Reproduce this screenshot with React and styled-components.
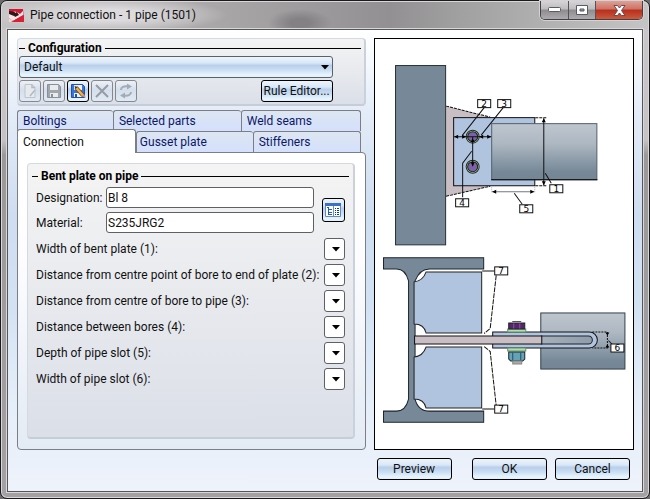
import React from "react";
import styled, { createGlobalStyle, css } from "styled-components";

const GlobalStyle = createGlobalStyle`
  *, *::before, *::after { box-sizing: border-box; }
  body {
    margin: 0;
    background: #6d6a6d;
    color: #111;
    font: 12px/16px Roboto, "Open Sans", sans-serif;
  }
  button, input, select { font: inherit; color: inherit; margin: 0; }
`;

const Window = styled.main`
  display: flex;
  flex-direction: column;
  min-height: 100vh;
  padding: 0 6px 6px;
  border: 1px solid #1d1a1d;
  border-radius: 7px;
  background: linear-gradient(#c9c7c9 0, #c4c2c4 28%, #9b989a 31%, #a3a1a3 100%);
  box-shadow: inset 0 0 0 1px #d9d7d9;
`;

const TitleBar = styled.header`
  display: flex;
  align-items: flex-start;
  height: 28px;
  margin: 0 -5px;
  padding: 0 5px;
  border-radius: 6px 6px 0 0;
  background:
    radial-gradient(ellipse 120px 18px at 105px 14px, #dddbdd 30%, transparent 100%),
    radial-gradient(ellipse 32px 14px at 298px 22px, #838183 30%, transparent 100%),
    linear-gradient(90deg, #c4c1c3 0, #a9a6a8 34%, #929092 60%, #a3a2a3 72%, #c5c4c5 100%);
  box-shadow: inset 0 1px #d9d7d9;
`;

const AppIcon = styled.svg`
  width: 15px;
  height: 15px;
  margin: 7px 6px 0 2px;
`;

const Title = styled.h1`
  flex: 1;
  margin: 6px 0 0;
  font-size: 12px;
  font-weight: 400;
  line-height: 16px;
`;

const WindowButtons = styled.div`
  display: flex;
  height: 19px;
  border: 1px solid #434144;
  border-top: 0;
  border-radius: 0 0 5px 5px;
  overflow: hidden;
  box-shadow: 0 0 0 1px #d4d2d4;
`;

const WindowButton = styled.button`
  display: grid;
  place-items: center;
  width: ${(p) => (p.$close ? "47px" : "27px")};
  padding: 0;
  border: 0;
  border-left: ${(p) => (p.$first ? "0" : "1px solid #565356")};
  background: ${(p) =>
    p.$close
      ? "linear-gradient(#dda096 0, #cf7163 45%, #b52f1e 50%, #cb5a3e 100%)"
      : "linear-gradient(#d6d4d6 0, #bdbbbd 45%, #8f8c8f 50%, #aeabae 100%)"};
`;

const Client = styled.div`
  flex: 1;
  display: grid;
  grid-template-columns: minmax(0, 348fr) minmax(0, 260fr);
  grid-template-rows: auto auto;
  align-content: start;
  column-gap: 8px;
  padding: 8px 8px 10px 9px;
  border: 1px solid #565658;
  background: linear-gradient(#fff 0, #f6f9fd 7%, #e3ecf8 18%, #cfddf0 40%, #d3e2f3 60%, #e4eef9 80%, #eef2fb 100%);
  box-shadow: 0 0 0 1px #d9d7d9;
`;

const Column = styled.div`
  display: flex;
  flex-direction: column;
  gap: 4px;
`;

const Panel = styled.section`
  border: 1px solid #d5dae2;
  border-right: 2px solid #cbd1db;
  border-bottom: 2px solid #c6ccd8;
  border-radius: 4px;
  background: linear-gradient(#f4f4f4, #dbdfe8);
`;

const ConfigPanel = styled(Panel)`
  height: 68px;
  padding: 1px 1px 0;
`;

const GroupPanel = styled(Panel)`
  flex: 1;
  padding: 4px 8px;
`;

const Legend = styled.h2`
  display: flex;
  align-items: center;
  gap: 3px;
  margin: 0 2px 0 ${(p) => (p.$inset ? "-4px" : "0")};
  font-size: 12px;
  line-height: 16px;
  font-weight: 700;
  color: #000;
  &::before, &::after { content: ""; height: 1px; background: #000; }
  &::before { width: 6px; }
  &::after { flex: 1; margin-right: ${(p) => (p.$inset ? "-6px" : "0")}; }
`;

const ConfigBody = styled.div`
  display: flex;
  flex-direction: column;
  gap: 2px;
  margin-right: 30px;
`;

const glossy = css`
  border: 1px solid #000;
  border-radius: 3px;
  background: linear-gradient(#edf5fc 0, #d9e7f7 30%, #b9cfeb 42%, #c6daf0 60%, #e6f5fd 90%, #e0effa 100%);
`;

const SelectBox = styled.span`
  display: grid;
  align-items: center;
  justify-items: end;
  flex: none;
  width: ${(p) => (p.$small ? "21px" : "100%")};
  height: 22px;
  & > * { grid-area: 1 / 1; }
  & > svg { pointer-events: none; margin-right: ${(p) => (p.$small ? "5px" : "4px")}; }
`;

const Select = styled.select`
  ${glossy}
  border-color: #5d6066;
  appearance: none;
  width: 100%;
  height: 22px;
  padding: 0 4px;
  ${(p) => p.$plain && "background: #fff;"}
`;

const Tools = styled.div`
  display: flex;
  gap: 2px;
`;

const ToolButton = styled.button`
  ${glossy}
  display: grid;
  place-items: center;
  width: 22px;
  height: 22px;
  padding: 0;
  &:disabled { border-color: #85898f; background: linear-gradient(#edf1f6, #d4dfed 45%, #e0eaf4); }
`;

const PushButton = styled.button`
  ${glossy}
  height: 22px;
  padding: 0 1px;
  white-space: nowrap;
`;

const RuleButton = styled(PushButton)`
  width: 72px;
  margin-left: auto;
`;

const Tabs = styled.div`
  flex: 1;
  display: flex;
  flex-direction: column;
`;

const TabRow = styled.div`
  display: grid;
  grid-template-columns: ${(p) => p.$columns};
  height: 21px;
  margin-right: 5px;
`;

const Tab = styled.button`
  position: relative;
  padding: 0 5px;
  border: 1px solid #7b7e84;
  border-bottom: 0;
  border-right-width: ${(p) => (p.$last ? "1px" : "0")};
  border-radius: 3px 3px 0 0;
  background: linear-gradient(#dde6f1, #d4e0fd);
  color: #0c1767;
  text-align: left;
  white-space: nowrap;
  ${(p) => p.$tight && "padding-left: 3px;"}
  ${(p) =>
    p.$active &&
    css`
      z-index: 1;
      margin: -2px 0 -1px;
      border-right-width: 1px;
      background: #fff;
      color: #111;
    `}
`;

const TabPage = styled.div`
  flex: 1;
  display: flex;
  flex-direction: column;
  padding: 10px 10px 10px 9px;
  border: 1px solid #7b7e84;
  border-radius: 0 4px 4px 4px;
  background: linear-gradient(#fff 0, #fdfdff 35%, #e3ebf4 100%);
`;

const MaterialBlock = styled.div`
  display: grid;
  grid-template-columns: minmax(0, 1fr) 23px;
  align-items: center;
  gap: 8px;
  margin: 3px 0 5px;
`;

const Fields = styled.div`
  display: grid;
  grid-template-columns: 70px minmax(0, 1fr);
  align-items: center;
  gap: 4px 0;
`;

const TextInput = styled.input`
  width: 100%;
  height: 21px;
  padding: 0 1px;
  border: 1px solid #5d6066;
  border-radius: 3px;
  background: #fff;
`;

const CatalogButton = styled(ToolButton)`
  width: 23px;
  height: 24px;
`;

const Dimensions = styled.div`
  display: flex;
  flex-direction: column;
  gap: 4px;
`;

const DimensionRow = styled.div`
  display: flex;
  align-items: center;
  justify-content: space-between;
  white-space: nowrap;
`;

const Drawing = styled.figure`
  margin: 0;
  border: 1px solid #000;
  background: #fff;
  svg { display: block; width: 100%; height: auto; }
`;

const Footer = styled.footer`
  grid-column: 2;
  display: flex;
  gap: 8px;
  padding: 8px 4px 0 3px;
`;

const DialogButton = styled(PushButton)`
  width: 75px;
  margin-right: ${(p) => (p.$apart ? "auto" : "0")};
`;

const Arrow = () => (
  <svg width="8" height="5" viewBox="0 0 8 5" aria-hidden="true">
    <path d="M0 0h8L4 4.5z" fill="#000" />
  </svg>
);

const NewIcon = () => (
  <svg width="16" height="16" viewBox="0 0 16 16" aria-hidden="true">
    <path d="M3 1.500h7l3 3v10H3z" fill="#e6e9ed" stroke="#bfc4ca" />
    <path d="M10 1.500v3h3M13 7l-5 6" fill="none" stroke="#b4bac1" strokeWidth="1.500" />
  </svg>
);

const Floppy = ({ body, shade, label }) => (
  <g>
    <path d="M1.500 1.500h11l2 2v11h-13z" fill={body} stroke={shade} />
    <path d="M4 2h8v5H4zM4 10h8v4H4z" fill={label} />
    <path d="M5 11h2v3H5z" fill={shade} />
  </g>
);

const SaveIcon = () => (
  <svg width="16" height="16" viewBox="0 0 16 16" aria-hidden="true">
    <Floppy body="#a2a7ad" shade="#8b9097" label="#e9ecef" />
  </svg>
);

const SaveAsIcon = () => (
  <svg width="16" height="16" viewBox="0 0 16 16" aria-hidden="true">
    <Floppy body="#3b74d4" shade="#2152a5" label="#edf3fc" />
    <path d="M6 4.500l7 8" stroke="#704716" strokeWidth="4" />
    <path d="M6 4.500l7 8" stroke="#efb148" strokeWidth="2.500" />
    <path d="M12 13l2-2 2 4z" fill="#d79370" />
    <path d="M4.500 3l3 1-2 2z" fill="#27303d" />
  </svg>
);

const DeleteIcon = () => (
  <svg width="16" height="16" viewBox="0 0 16 16" aria-hidden="true">
    <path d="M2 2l12 12M14 2L2 14" stroke="#969ca4" strokeWidth="2" />
  </svg>
);

const RefreshIcon = () => (
  <svg width="16" height="16" viewBox="0 0 16 16" aria-hidden="true" fill="none" stroke="#a5abb2" strokeWidth="2">
    <path d="M3 7c0-3 3-4 7-3.500M13 9c0 3-3 4-7 3.500" />
    <path d="M9 .500l5 3-5 3zM7 9.500l-5 3 5 3z" fill="#a5abb2" stroke="none" />
  </svg>
);

const CatalogIcon = () => (
  <svg width="16" height="16" viewBox="0 0 16 16" aria-hidden="true">
    <path d="M.500 1.500h15v13H.500z" fill="#f9fcff" stroke="#668ac0" />
    <path d="M0 1h16v3H0z" fill="#3c70c4" />
    <path d="M8 4h1v11H8z" fill="#728fba" />
    <path d="M2 5.500h2M3.500 5v8M4 7.500h3M4 10.500h3M4 12.500h3" fill="none" stroke="#2b5ca7" />
    <path d="M10 6.500h1m1 0h2M10 8.500h1m1 0h2M10 10.500h1m1 0h2M10 12.500h1m1 0h2" stroke="#173b70" />
  </svg>
);

const Tag = ({ x, y, n }) => (
  <g>
    <rect x={x} y={y} width="13" height="8" fill="#fff" stroke="#111" />
    <text x={x + 6.5} y={y + 7} textAnchor="middle" fontFamily="DejaVu Sans, sans-serif" fontSize="9" fill="#000">
      {n}
    </text>
  </g>
);

const Bore = ({ y }) => (
  <g>
    <circle cx="472.500" cy={y} r="6.500" fill="#b7ddb4" stroke="#222b22" />
    <circle cx="472.500" cy={y} r="5" fill="#7b61a8" stroke="#172316" />
  </g>
);

const PipeDrawing = () => (
  <svg viewBox="375 39 258 409" role="img" aria-label="Pipe connection dimensions">
    <defs>
      <linearGradient id="pipe" x1="0" y1="0" x2="0" y2="1">
        <stop offset="0" stopColor="#bec5cf" />
        <stop offset="0.350" stopColor="#aeb8c2" />
        <stop offset="0.850" stopColor="#778998" />
        <stop offset="1" stopColor="#748594" />
      </linearGradient>
      <linearGradient id="slot" x1="0" y1="0" x2="1" y2="0">
        <stop offset="0" stopColor="#a5b0bb" />
        <stop offset="1" stopColor="#8e9dab" />
      </linearGradient>
    </defs>

    <path d="M446 106l44 11v69l-44 10z" fill="#c8bec3" />
    <path d="M446 106l44 11M446 196l44-10" stroke="#111" strokeDasharray="3 1" />
    <rect x="395.500" y="65.500" width="50" height="179" fill="#778898" stroke="#263038" />
    <rect x="453.500" y="117.500" width="81" height="68" fill="#b0c4df" stroke="#111" />
    <rect x="491.500" y="123.500" width="105" height="56" fill="url(#pipe)" stroke="#50606d" />
    <path d="M491 179.500h106" stroke="#000" />
    <Bore y={136.500} />
    <Bore y={166.500} />
    <g fill="none" stroke="#111">
      <path d="M454 136.500h37M472.500 137v29M484 107.500l-22 28M503 107.500L481 135M462.500 197v-34l9-12" />
      <path d="M535 117.500h11M535 185.500h11" strokeDasharray="3 1" />
      <path d="M543.500 118v67M545 173l6 10" />
      <path d="M491.500 187v6M534.500 187v6" stroke="#aaa" strokeDasharray="1 1" />
      <path d="M492 191.500h42" stroke="#777" />
      <path d="M514 193l8 11" />
    </g>
    <path d="M454 136.500l4-2v4zM491 136.500l-4-2v4zM466 136.500l-4-2v4zM479 136.500l4-2v4zM472.500 138l-2 4h4zM472.500 166l-2-4h4zM543.500 118l-2 4h4zM543.500 185l-2-4h4zM492 191.500l4-2v4zM534 191.500l-4-2v4z" />
    <Tag x={477.5} y={99.5} n="2" />
    <Tag x={497.5} y={99.5} n="3" />
    <Tag x={455.5} y={198.5} n="4" />
    <Tag x={549.5} y={184.5} n="1" />
    <Tag x={519.5} y={204.5} n="5" />

    <path
      d="M383.500 257.500h100v11h-54q-10 0-14.500 12v118q3 12 14.500 12h54v11h-100v-11h13q9 0 12-12v-118q-3-12-12-12h-13z"
      fill="#778898"
      stroke="#1c252c"
    />
    <path d="M426 271.500h55.500v61H426q-2-9-12-9v-42q9-1 12-10z" fill="#b0c4df" stroke="#222" />
    <path d="M426 346.500h55.500v61H426q-2-9-12-9v-42q9-1 12-10z" fill="#b0c4df" stroke="#222" />
    <rect x="540.500" y="312.500" width="84" height="56" fill="url(#pipe)" stroke="#35414a" />
    <path d="M492.500 331.500H589a8 8 0 0 1 0 16h-96.500z" fill="#b0c4df" stroke="#111" />
    <path d="M541 335.500h47a4 4 0 0 1 0 8h-47z" fill="url(#slot)" stroke="#222" />
    <rect x="414.500" y="335.500" width="127" height="8" fill="#c8bec3" stroke="#111" />
    <g stroke="#222">
      <rect x="507.500" y="328.500" width="18" height="3" fill="#b0dfb1" stroke="#65936a" />
      <path d="M508.500 322.500h16v6h-16z" fill="#56256f" />
      <path d="M512 321h9" stroke="#555" strokeWidth="1" />
      <path d="M513.500 323v5M519.500 323v5" stroke="#8c579c" />
      <rect x="507.500" y="347.500" width="18" height="3" fill="#b0dfb1" stroke="#65936a" />
      <path d="M508.500 351.500h16v7l-2 2h-12l-2-2z" fill="#62a3b9" />
      <path d="M512.500 352v8M520.500 352v8" stroke="#254f60" />
      <path d="M512.500 360.500h9v3h-9z" fill="#aaa" stroke="#888" />
    </g>
    <g fill="none" stroke="#111">
      <path d="M482 270.500h12M482 408.500h12" />
      <path d="M496 275l-6 53-6 5M484 346l6 5 6 54" strokeDasharray="5 1" />
      <path d="M592 331.500h15v16h-15" strokeDasharray="2 1" />
      <path d="M608 340l4 4" />
    </g>
    <path d="M605 332h4l-2 3zM605 347h4l-2-3z" />
    <Tag x={494.5} y={266.5} n="7" />
    <Tag x={494.5} y={404.5} n="7" />
    <Tag x={610.5} y={343.5} n="6" />
  </svg>
);

const dimensions = [
  "Width of bent plate (1):",
  "Distance from centre point of bore to end of plate (2):",
  "Distance from centre of bore to pipe (3):",
  "Distance between bores (4):",
  "Depth of pipe slot (5):",
  "Width of pipe slot (6):",
];

export default function App() {
  return (
    <>
      <GlobalStyle />
      <Window>
        <TitleBar>
          <AppIcon viewBox="0 0 15 15" aria-hidden="true">
            <path d="M0 1h14l1 13H0z" fill="#cf1835" />
            <path d="M0 6q6-5 11 0l3-3v4L4 13 0 10z" fill="#f5e7e5" />
            <path d="M0 3l6 1-1 4-5-2zM4 6l4-2 2 3-4 2z" fill="#321719" />
            <path d="M2 14L15 7v7z" fill="#d62136" />
            <path d="M0 10l4 3-2 1H0z" fill="#f0d9da" />
          </AppIcon>
          <Title>Pipe connection - 1 pipe (1501)</Title>
          <WindowButtons>
            <WindowButton $first aria-label="Minimize">
              <svg width="13" height="6" viewBox="0 0 13 6">
                <rect x=".500" y=".500" width="12" height="4" rx="1" fill="#fff" stroke="#565b68" />
              </svg>
            </WindowButton>
            <WindowButton aria-label="Maximize">
              <svg width="12" height="10" viewBox="0 0 12 10">
                <path d="M.500.500h11v9H.500zM4 4v2h4V4z" fill="#fff" fillRule="evenodd" stroke="#565b68" />
              </svg>
            </WindowButton>
            <WindowButton $close aria-label="Close">
              <svg width="13" height="11" viewBox="0 0 13 11">
                <path d="M1 .500h3.500l2 2.500 2-2.500H12L8.500 5.500l3.500 5H8.500l-2-2.500-2 2.500H1l3.500-5z" fill="#fff" stroke="#68494c" />
              </svg>
            </WindowButton>
          </WindowButtons>
        </TitleBar>
        <Client>
          <Column>
            <ConfigPanel>
              <Legend>Configuration</Legend>
              <ConfigBody>
                <SelectBox>
                  <Select aria-label="Configuration" defaultValue="Default">
                    <option>Default</option>
                  </Select>
                  <Arrow />
                </SelectBox>
                <Tools>
                  <ToolButton disabled aria-label="New"><NewIcon /></ToolButton>
                  <ToolButton disabled aria-label="Save"><SaveIcon /></ToolButton>
                  <ToolButton aria-label="Save as"><SaveAsIcon /></ToolButton>
                  <ToolButton disabled aria-label="Delete"><DeleteIcon /></ToolButton>
                  <ToolButton disabled aria-label="Refresh"><RefreshIcon /></ToolButton>
                  <RuleButton>Rule Editor...</RuleButton>
                </Tools>
              </ConfigBody>
            </ConfigPanel>
            <Tabs>
              <div role="tablist">
                <TabRow $columns="96fr 128fr 120fr">
                  <Tab role="tab">Boltings</Tab>
                  <Tab role="tab">Selected parts</Tab>
                  <Tab role="tab" $last>Weld seams</Tab>
                </TabRow>
                <TabRow $columns="119fr 117fr 108fr">
                  <Tab role="tab" $active aria-selected="true">Connection</Tab>
                  <Tab role="tab" $tight>Gusset plate</Tab>
                  <Tab role="tab" $last>Stiffeners</Tab>
                </TabRow>
              </div>
              <TabPage role="tabpanel">
                <GroupPanel>
                  <Legend $inset>Bent plate on pipe</Legend>
                  <MaterialBlock>
                    <Fields>
                      <label htmlFor="designation">Designation:</label>
                      <TextInput id="designation" defaultValue="Bl 8" />
                      <label htmlFor="material">Material:</label>
                      <TextInput id="material" defaultValue="S235JRG2" />
                    </Fields>
                    <CatalogButton aria-label="Open catalog"><CatalogIcon /></CatalogButton>
                  </MaterialBlock>
                  <Dimensions>
                    {dimensions.map((text, i) => (
                      <DimensionRow key={text}>
                        <label htmlFor={`dimension-${i}`}>{text}</label>
                        <SelectBox $small>
                          <Select $plain id={`dimension-${i}`}>
                            <option aria-label="Automatic" value="" />
                          </Select>
                          <Arrow />
                        </SelectBox>
                      </DimensionRow>
                    ))}
                  </Dimensions>
                </GroupPanel>
              </TabPage>
            </Tabs>
          </Column>
          <Drawing><PipeDrawing /></Drawing>
          <Footer>
            <DialogButton $apart>Preview</DialogButton>
            <DialogButton>OK</DialogButton>
            <DialogButton>Cancel</DialogButton>
          </Footer>
        </Client>
      </Window>
    </>
  );
}
